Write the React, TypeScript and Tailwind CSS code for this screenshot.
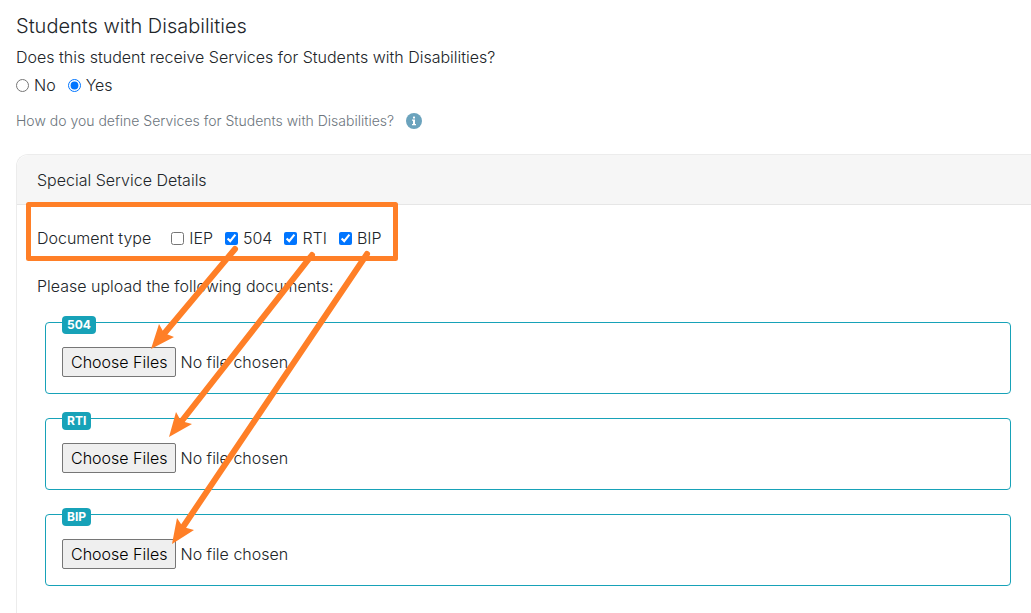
import React, { useState } from 'react';

const DOCUMENT_TYPES = ['IEP', '504', 'RTI', 'BIP'];

const InfoIcon = () => (
  <svg className="h-4 w-4" viewBox="0 0 16 16" aria-hidden="true">
    <circle cx="8" cy="8" r="8" fill="#6ba3bd" />
    <rect x="7" y="3.5" width="2" height="2" rx="0.5" fill="#fff" />
    <path d="M6 6.5h3V11h1v1.2H6V11h1V7.7H6z" fill="#fff" />
  </svg>
);

const UploadBox = ({ name }: { name: string }) => (
  <fieldset className="relative min-w-0 rounded border border-[#17a2b8] px-4 pt-6 pb-4">
    <legend className="absolute -top-[7px] left-4 rounded bg-[#17a2b8] px-[5px] text-xs leading-[18px] font-bold text-white">
      {name}
    </legend>
    <input
      type="file"
      multiple
      aria-label={`Upload ${name}`}
      className="block h-[30px] w-full text-base leading-6 file:h-[30px] file:rounded-xs file:border file:border-solid file:border-[#767676] file:bg-[#efefef] file:px-2 file:text-black"
    />
  </fieldset>
);

const Annotations = () => (
  <svg className="pointer-events-none absolute top-0 left-0" width="420" height="560" viewBox="0 0 420 560" aria-hidden="true">
    <g fill="none" stroke="#ff7f27" strokeWidth="6" strokeLinecap="round" strokeLinejoin="round">
      <rect x="28.5" y="204.5" width="367" height="54" strokeWidth="5" />
      <path d="M235 249L163 335" />
      <path d="M312 255L181 422" />
      <path d="M367 254L183 527" />
    </g>
    <g fill="#ff7f27">
      <path d="M151 349L159 324L164 333L174 337z" />
      <path d="M169 437L176 412L181 421L192 424z" />
      <path d="M172 544L177 518L183 527L194 530z" />
    </g>
  </svg>
);

const App: React.FC = () => {
  const [receives, setReceives] = useState('Yes');
  const [selected, setSelected] = useState(['504', 'RTI', 'BIP']);

  const toggle = (name: string) =>
    setSelected(selected.includes(name) ? selected.filter((item) => item !== name) : [...selected, name]);

  return (
    <main className="relative min-h-screen overflow-hidden bg-white pt-3 pl-4 font-['Inter','Liberation_Sans',sans-serif] text-base font-light text-[#212529]">
      <h1 className="text-xl leading-7">Students with Disabilities</h1>
      <p className="mt-[5px] leading-6">Does this student receive Services for Students with Disabilities?</p>
      <div className="mt-1 flex gap-3">
        {['No', 'Yes'].map((answer) => (
          <label key={answer} className="flex items-center gap-[5px]">
            <input
              type="radio"
              name="receives"
              className="h-[13px] w-[13px]"
              checked={receives === answer}
              onChange={() => setReceives(answer)}
            />
            {answer}
          </label>
        ))}
      </div>
      <div className="mt-3 flex items-center gap-3 text-sm leading-6 text-[#6c757d]">
        <span>How do you define Services for Students with Disabilities?</span>
        <button type="button" aria-label="More information">
          <InfoIcon />
        </button>
      </div>

      <section className="mt-[21px] rounded-tl-xl border-t border-l border-[#ececec]">
        <h2 className="rounded-tl-xl border-b border-[#e6e6e6] bg-[#f6f6f6] px-5 pt-[13px] pb-3 leading-6">
          Special Service Details
        </h2>
        <div className="px-5 pt-[21px] pb-7">
          <div className="flex items-center gap-5 leading-6">
            <span>Document type</span>
            <div className="flex gap-3">
              {DOCUMENT_TYPES.map((name) => (
                <label key={name} className="flex items-center gap-[5px]">
                  <input
                    type="checkbox"
                    className="h-[13px] w-[13px]"
                    checked={selected.includes(name)}
                    onChange={() => toggle(name)}
                  />
                  {name}
                </label>
              ))}
            </div>
          </div>
          <p className="mt-6 leading-6">Please upload the following documents:</p>
          <div className="mt-6 ml-2 flex flex-col gap-6">
            {DOCUMENT_TYPES.filter((name) => selected.includes(name)).map((name) => (
              <UploadBox key={name} name={name} />
            ))}
          </div>
        </div>
      </section>
      <Annotations />
    </main>
  );
};

export default App;
